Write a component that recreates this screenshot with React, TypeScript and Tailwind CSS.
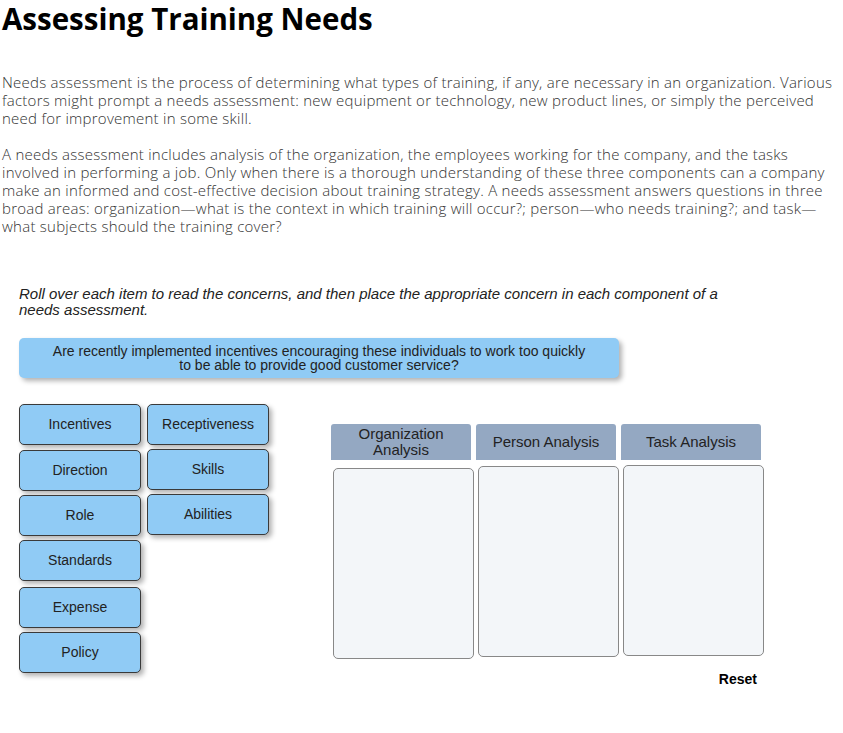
import React from "react";

const btnCls =
  "w-[122px] h-[41px] flex items-center justify-center rounded-[5px] border border-[#3a3a3a] bg-[#90cbf5] text-[14px] text-[#222] shadow-[3px_3px_5px_rgba(0,0,0,0.3)]";

function Btn({ label, mt }: { label: string; mt: string }) {
  return <div className={btnCls + " " + mt}>{label}</div>;
}

const p1 = [
  "Needs assessment is the process of determining what types of training, if any, are necessary in an organization. Various",
  "factors might prompt a needs assessment: new equipment or technology, new product lines, or simply the perceived",
  "need for improvement in some skill.",
];
const p2 = [
  "A needs assessment includes analysis of the organization, the employees working for the company, and the tasks",
  "involved in performing a job. Only when there is a thorough understanding of these three components can a company",
  "make an informed and cost-effective decision about training strategy. A needs assessment answers questions in three",
  "broad areas: organization—what is the context in which training will occur?; person—who needs training?; and task—",
  "what subjects should the training cover?",
];

const cols = [
  { h: ["Organization", "Analysis"], mt: "mt-[8px]" },
  { h: ["Person Analysis"], mt: "mt-[6px]" },
  { h: ["Task Analysis"], mt: "mt-[5px]" },
];

export default function App() {
  return (
    <div className="bg-white w-[843px] min-h-[733px] relative">
      <div className="pl-[2px] text-[#333]" style={{ fontFamily: "'Open Sans', sans-serif" }}>
        <h1 className="text-[29.5px] font-bold text-black leading-[38px]">Assessing Training Needs</h1>
        <p className="mt-[35px] text-[15px] leading-[18px] font-light tracking-[0.25px] whitespace-nowrap">
          {p1.map((l, i) => (
            <span key={i} className="block">{l}</span>
          ))}
        </p>
        <p className="mt-[18px] text-[15px] leading-[18px] font-light tracking-[0.25px] whitespace-nowrap">
          {p2.map((l, i) => (
            <span key={i} className="block">{l}</span>
          ))}
        </p>
      </div>
      <div className="pl-[19px]" style={{ fontFamily: "'Liberation Sans', Arial, sans-serif" }}>
        <p className="mt-[51px] text-[15px] leading-[16px] italic text-[#222] whitespace-nowrap">
          Roll over each item to read the concerns, and then place the appropriate concern in each component of a
          <br />
          needs assessment.
        </p>
        <div className="mt-[20px] w-[600px] h-[40px] rounded-[5px] bg-[#90cbf5] shadow-[3px_3px_5px_rgba(0,0,0,0.3)] flex items-center justify-center text-center text-[14px] leading-[14px] text-[#222]">
          <div>
            Are recently implemented incentives encouraging these individuals to work too quickly
            <br />
            to be able to provide good customer service?
          </div>
        </div>
        <div className="mt-[26px] flex">
          <div className="flex flex-col">
            <Btn label="Incentives" mt="mt-0" />
            <Btn label="Direction" mt="mt-[5px]" />
            <Btn label="Role" mt="mt-[4px]" />
            <Btn label="Standards" mt="mt-[4px]" />
            <Btn label="Expense" mt="mt-[6px]" />
            <Btn label="Policy" mt="mt-[4px]" />
          </div>
          <div className="ml-[6px] flex flex-col">
            <Btn label="Receptiveness" mt="mt-0" />
            <Btn label="Skills" mt="mt-[4px]" />
            <Btn label="Abilities" mt="mt-[4px]" />
          </div>
          <div className="ml-[62px] mt-[20px] flex flex-col">
            <div className="flex gap-[5px]">
              {cols.map((c, i) => (
                <div key={i} className="w-[140px] flex flex-col">
                  <div className="h-[36px] rounded-t-[3px] bg-[#94a8c2] flex flex-col items-center justify-center text-center text-[15px] leading-[16px] text-[#222]">
                    {c.h.map((t, j) => (
                      <span key={j}>{t}</span>
                    ))}
                  </div>
                  <div className={"ml-[2px] w-[141px] h-[191px] rounded-[5px] border border-[#888] bg-[#f3f6f9] " + c.mt} />
                </div>
              ))}
            </div>
            <div className="mt-[10px] pr-[4px] text-right text-[14px] font-bold text-black">Reset</div>
          </div>
        </div>
      </div>
    </div>
  );
}
